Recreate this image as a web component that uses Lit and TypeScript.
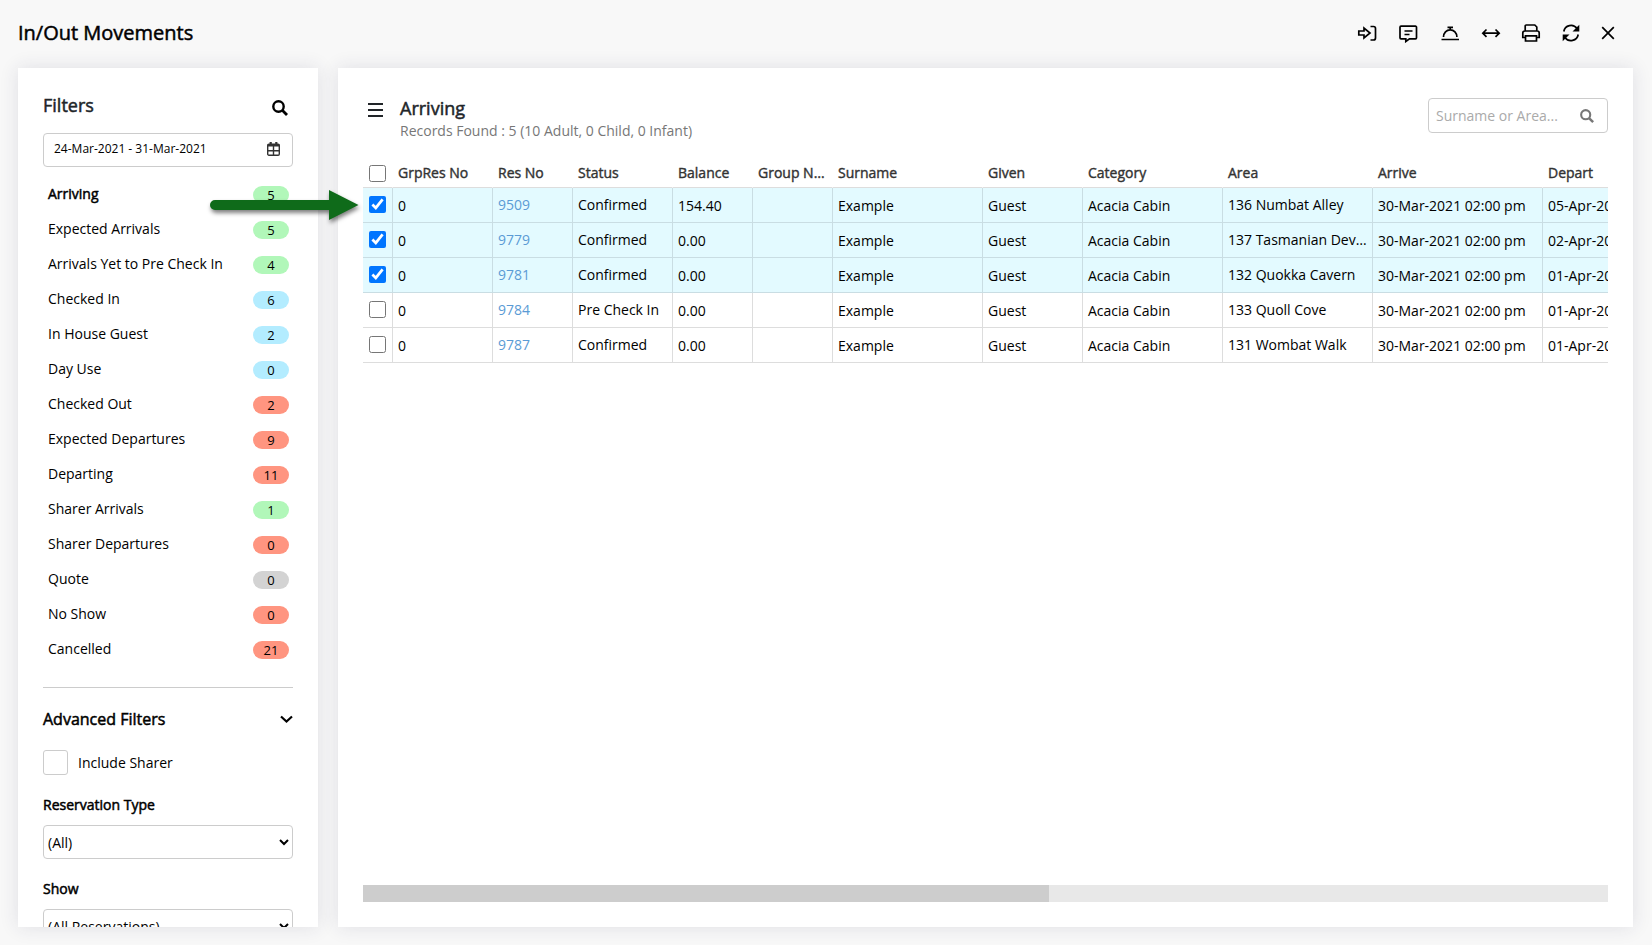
import { LitElement, html, css, svg } from "lit";
import { customElement, state } from "lit/decorators.js";
import { classMap } from "lit/directives/class-map.js";

type Tone = "green" | "blue" | "red" | "grey";

const FILTERS: [string, number, Tone][] = [
  ["Arriving", 5, "green"],
  ["Expected Arrivals", 5, "green"],
  ["Arrivals Yet to Pre Check In", 4, "green"],
  ["Checked In", 6, "blue"],
  ["In House Guest", 2, "blue"],
  ["Day Use", 0, "blue"],
  ["Checked Out", 2, "red"],
  ["Expected Departures", 9, "red"],
  ["Departing", 11, "red"],
  ["Sharer Arrivals", 1, "green"],
  ["Sharer Departures", 0, "red"],
  ["Quote", 0, "grey"],
  ["No Show", 0, "red"],
  ["Cancelled", 21, "red"],
];

interface Reservation {
  res: string;
  status: string;
  balance: string;
  area: string;
  depart: string;
  selected: boolean;
}

const RESERVATIONS: Reservation[] = [
  { res: "9509", status: "Confirmed", balance: "154.40", area: "136 Numbat Alley", depart: "05-Apr-2021 10:00 am", selected: true },
  { res: "9779", status: "Confirmed", balance: "0.00", area: "137 Tasmanian Devil Den", depart: "02-Apr-2021 10:00 am", selected: true },
  { res: "9781", status: "Confirmed", balance: "0.00", area: "132 Quokka Cavern", depart: "01-Apr-2021 10:00 am", selected: true },
  { res: "9784", status: "Pre Check In", balance: "0.00", area: "133 Quoll Cove", depart: "01-Apr-2021 10:00 am", selected: false },
  { res: "9787", status: "Confirmed", balance: "0.00", area: "131 Wombat Walk", depart: "01-Apr-2021 10:00 am", selected: false },
];

const COLUMNS: [string, number][] = [
  ["GrpRes No", 100],
  ["Res No", 80],
  ["Status", 100],
  ["Balance", 80],
  ["Group Name", 80],
  ["Surname", 150],
  ["Given", 100],
  ["Category", 140],
  ["Area", 150],
  ["Arrive", 170],
  ["Depart", 170],
];

const TOOLS = [
  {
    label: "Check in",
    width: 20,
    art: svg`<path d="M1.800 8H7V5l6 5-6 5v-3H1.800zM13.500 3.500h3a2 2 0 0 1 2 2v9.500a2 2 0 0 1-2 2h-3"/>`,
  },
  {
    label: "Notes",
    width: 22,
    art: svg`<path d="M4 3.200h14.500a1 1 0 0 1 1 1v10.600a1 1 0 0 1-1 1h-6L8.800 18.500v-2.700H4a1 1 0 0 1-1-1V4.200a1 1 0 0 1 1-1zM7.500 8h8M7.500 11.500h5"/>`,
  },
  {
    label: "Service",
    width: 22,
    art: svg`<path d="M2.500 16.500h17.500M4.500 14a6.700 7.200 0 0 1 13.400 0M8.500 4.300h5.500M11.200 4.300v2.500"/>`,
  },
  {
    label: "Move",
    width: 20,
    art: svg`<path d="M1.800 10.200h16.400M5.500 6.500 1.800 10.200l3.700 3.700M14.500 6.500l3.700 3.700-3.700 3.700"/>`,
  },
  {
    label: "Print",
    width: 20,
    art: svg`<path d="M4.200 8V3a1 1 0 0 1 1-1h8.600l2 2v4M4.500 14.500H1.800v-4.500a2 2 0 0 1 2-2h12.400a2 2 0 0 1 2 2v4.500h-2.700M4.500 12.800h11v5.200h-11z"/>`,
  },
  {
    label: "Refresh",
    width: 20,
    art: svg`<path d="M2.800 8.500A7.300 7.300 0 0 1 16 5.500M17.200 11.500A7.300 7.300 0 0 1 4 14.500"/><path class="fill" d="M18.300 1.800v6.800h-6.800zM1.700 18.200v-6.800h6.800z"/>`,
  },
  {
    label: "Close",
    width: 14,
    art: svg`<path d="M1.200 4.200l11.600 11.600M12.800 4.200L1.200 15.800"/>`,
  },
];

const searchIcon = (size: number) => html`<svg viewBox="0 0 16 16" width=${size} height=${size} aria-hidden="true">
  <circle cx="6.500" cy="6.500" r="5.200" fill="none" stroke="currentColor" stroke-width="2.400" />
  <path d="M10.300 10.300 15 15" fill="none" stroke="currentColor" stroke-width="2.800" />
</svg>`;

@customElement("app-root")
export class AppRoot extends LitElement {
  @state() private active = "Arriving";
  @state() private rows = RESERVATIONS;

  static styles = css`
    :host {
      display: flex;
      flex-direction: column;
      height: 100vh;
      overflow: hidden;
      background: #f8f8f8;
      color: #000;
      font: 14px/20px "Open Sans", sans-serif;
    }
    * {
      box-sizing: border-box;
    }
    h1,
    h2,
    h3,
    p {
      margin: 0;
      font-weight: 400;
    }
    button {
      font: inherit;
      color: inherit;
      background: none;
      border: 0;
      padding: 0;
      cursor: pointer;
    }
    .strong {
      -webkit-text-stroke: 0.5px currentColor;
    }
    .top {
      display: flex;
      align-items: center;
      justify-content: space-between;
      flex: none;
      height: 68px;
      padding: 0 37px 2px 18px;
    }
    .top h1 {
      font-size: 20px;
      line-height: 28px;
    }
    .tools {
      display: flex;
      gap: 20px;
    }
    .tools button {
      display: block;
      height: 20px;
    }
    .tools svg {
      display: block;
      fill: none;
      stroke: currentColor;
      stroke-width: 1.7;
    }
    .tools .fill {
      fill: currentColor;
      stroke: none;
    }
    .body {
      display: flex;
      flex: 1;
      min-height: 0;
      gap: 20px;
      padding: 0 19px 18px 18px;
    }
    .panel {
      background: #fff;
      box-shadow: 0 0 18px rgba(40, 40, 80, 0.12);
      padding: 25px;
    }
    .side {
      flex: none;
      width: 300px;
      padding-bottom: 0;
      overflow: hidden;
    }
    .heading {
      display: flex;
      align-items: center;
      justify-content: space-between;
      height: 26px;
      padding-right: 5px;
      color: #212529;
    }
    .heading h2 {
      padding-bottom: 2px;
      font-size: 18px;
      line-height: 24px;
    }
    .heading button {
      height: 16px;
      margin-top: 4px;
      color: #000;
    }
    .heading svg,
    .search svg,
    .date svg,
    .more svg {
      display: block;
    }
    .date {
      display: flex;
      align-items: center;
      height: 34px;
      margin-top: 14px;
      padding: 0 12px 2px 10px;
      border: 1px solid #ccc;
      border-radius: 4px;
    }
    .date input,
    .search input {
      flex: 1;
      min-width: 0;
      padding: 0;
      border: 0;
      outline: 0;
      background: none;
      font: 12px/20px "Open Sans", sans-serif;
      color: #000;
    }
    .list {
      list-style: none;
      margin: 10px 0 0;
      padding: 0;
    }
    .list button {
      display: flex;
      align-items: center;
      justify-content: space-between;
      width: 100%;
      height: 35px;
      padding: 0 4px 0 5px;
      text-align: left;
    }
    .name {
      padding-bottom: 2px;
    }
    .pill {
      width: 36px;
      height: 18px;
      margin-top: 1px;
      border-radius: 9px;
      font-size: 13px;
      line-height: 19px;
      text-align: center;
    }
    .green {
      background: #b1f7b9;
    }
    .blue {
      background: #b3ecff;
    }
    .red {
      background: #ff9580;
    }
    .grey {
      background: #d3d3d3;
    }
    .more {
      display: flex;
      align-items: center;
      justify-content: space-between;
      width: 100%;
      margin-top: 20px;
      padding: 19px 0 1px;
      border-top: 1px solid #ccc;
    }
    .more h3 {
      font-size: 16px;
      line-height: 24px;
    }
    .sharer {
      display: flex;
      align-items: center;
      gap: 10px;
      margin-top: 18px;
    }
    .sharer input {
      appearance: none;
      width: 25px;
      height: 25px;
      margin: 0;
      border: 1px solid #ccc;
      border-radius: 3px;
    }
    .field {
      display: block;
      margin-top: 20px;
    }
    select {
      display: block;
      width: 100%;
      height: 34px;
      margin-top: 10px;
      border: 1px solid #ccc;
      border-radius: 4px;
      background: #fff;
      color: #000;
      font: 14px/20px "Open Sans", sans-serif;
    }
    .main {
      display: flex;
      flex-direction: column;
      flex: 1;
      min-width: 0;
    }
    .bar {
      display: flex;
      align-items: flex-start;
      gap: 17px;
      padding-left: 5px;
      color: #212529;
    }
    .bar .menu {
      padding-top: 10px;
    }
    .bar .menu svg {
      display: block;
    }
    .titles {
      flex: 1;
      padding-top: 4px;
    }
    .titles h2 {
      font-size: 18px;
      line-height: 22px;
    }
    .titles p {
      color: #777;
      line-height: 24px;
    }
    .search {
      display: flex;
      align-items: center;
      width: 180px;
      height: 35px;
      margin-top: 5px;
      padding: 0 13px 0 7px;
      border: 1px solid #ccc;
      border-radius: 4px;
      color: #777;
    }
    .search input {
      font-size: 14px;
    }
    .search input::placeholder {
      color: #aaa;
    }
    .grid {
      flex: 1;
      min-height: 0;
      margin-top: 15px;
      overflow: hidden;
    }
    table {
      table-layout: fixed;
      width: 1350px;
      border-collapse: separate;
      border-spacing: 0;
    }
    th,
    td {
      height: 35px;
      padding: 0 5px;
      border-bottom: 1px solid #ddd;
      border-right: 1px solid #ddd;
      overflow: hidden;
      white-space: nowrap;
      text-overflow: ellipsis;
      text-align: left;
      font-weight: 400;
    }
    th {
      height: 30px;
      border-right-color: transparent;
      color: #333;
      -webkit-text-stroke: 0.4px currentColor;
    }
    td {
      padding-top: 1px;
    }
    td.up {
      padding-top: 0;
      padding-bottom: 1px;
    }
    th.pick {
      padding: 2px 6px 0;
    }
    td.pick {
      padding: 0 6px 1px;
    }
    .chosen td {
      background: #e3faff;
      border-color: #c9dde3;
    }
    .pick input {
      display: block;
      width: 17px;
      height: 17px;
      margin: 0;
      accent-color: #0075ff;
    }
    td a {
      color: #5b9bd5;
      text-decoration: none;
    }
    .track {
      flex: none;
      height: 17px;
      background: #e8e8e8;
    }
    .thumb {
      width: 55.1%;
      height: 17px;
      background: #cdcdcd;
    }
    .arrow {
      position: absolute;
      left: 205px;
      top: 185px;
      pointer-events: none;
      filter: drop-shadow(1px 3px 2px rgba(0, 0, 0, 0.5));
    }
  `;

  private toggle(row: Reservation) {
    this.rows = this.rows.map((r) => (r === row ? { ...r, selected: !r.selected } : r));
  }

  private renderSide() {
    return html`<aside class="panel side">
      <div class="heading">
        <h2 class="strong">Filters</h2>
        <button aria-label="Search">${searchIcon(16)}</button>
      </div>
      <div class="date">
        <input aria-label="Date range" .value=${"24-Mar-2021 - 31-Mar-2021"} />
        <svg viewBox="0 0 13 14" width="13" height="14" aria-hidden="true">
          <rect x="0.700" y="2.200" width="11.600" height="11" rx="1.200" fill="none" stroke="#333" stroke-width="1.400" />
          <path d="M0.500 3.500h12M3.700 0v3M9.300 0v3" fill="none" stroke="#333" stroke-width="2.200" />
          <path d="M6.500 4v9M1 8.700h11" fill="none" stroke="#333" stroke-width="1.400" />
        </svg>
      </div>
      <ul class="list">
        ${FILTERS.map(
          ([name, count, tone]) => html`<li>
            <button @click=${() => (this.active = name)}>
              <span class=${classMap({ name: true, strong: this.active === name })}>${name}</span>
              <span class="pill ${tone}">${count}</span>
            </button>
          </li>`,
        )}
      </ul>
      <button class="more" aria-expanded="true">
        <h3 class="strong">Advanced Filters</h3>
        <svg viewBox="0 0 13 9" width="13" height="9" aria-hidden="true">
          <path d="M1 1.500l5.500 5 5.500-5" fill="none" stroke="currentColor" stroke-width="2.200" />
        </svg>
      </button>
      <label class="sharer"><input type="checkbox" />Include Sharer</label>
      <label class="field strong" for="type">Reservation Type</label>
      <select id="type">
        <option>(All)</option>
      </select>
      <label class="field strong" for="show">Show</label>
      <select id="show">
        <option>(All Reservations)</option>
      </select>
    </aside>`;
  }

  private renderRow(row: Reservation) {
    return html`<tr class=${classMap({ chosen: row.selected })}>
      <td class="pick">
        <input type="checkbox" aria-label="Select ${row.res}" .checked=${row.selected} @change=${() => this.toggle(row)} />
      </td>
      <td>0</td>
      <td class="up"><a href="#${row.res}">${row.res}</a></td>
      <td class="up">${row.status}</td>
      <td>${row.balance}</td>
      <td></td>
      <td>Example</td>
      <td>Guest</td>
      <td>Acacia Cabin</td>
      <td class="up">${row.area}</td>
      <td>30-Mar-2021 02:00 pm</td>
      <td>${row.depart}</td>
    </tr>`;
  }

  render() {
    return html`
      <header class="top">
        <h1 class="strong">In/Out Movements</h1>
        <div class="tools">
          ${TOOLS.map(
            (tool) => html`<button aria-label=${tool.label}>
              <svg viewBox="0 0 ${tool.width} 20" width=${tool.width} height="20">${tool.art}</svg>
            </button>`,
          )}
        </div>
      </header>
      <div class="body">
        ${this.renderSide()}
        <main class="panel main">
          <div class="bar">
            <button class="menu" aria-label="Menu">
              <svg viewBox="0 0 15 14" width="15" height="14" aria-hidden="true">
                <path d="M0 1h15M0 7h15M0 13h15" stroke="currentColor" stroke-width="2" />
              </svg>
            </button>
            <div class="titles">
              <h2 class="strong">Arriving</h2>
              <p>Records Found : 5 (10 Adult, 0 Child, 0 Infant)</p>
            </div>
            <div class="search">
              <input aria-label="Search" placeholder="Surname or Area..." />
              ${searchIcon(14)}
            </div>
          </div>
          <div class="grid">
            <table>
              <colgroup>
                <col style="width:30px" />
                ${COLUMNS.map(([, width]) => html`<col style="width:${width}px" />`)}
              </colgroup>
              <thead>
                <tr>
                  <th class="pick"><input type="checkbox" aria-label="Select all" /></th>
                  ${COLUMNS.map(([name]) => html`<th>${name}</th>`)}
                </tr>
              </thead>
              <tbody>
                ${this.rows.map((row) => this.renderRow(row))}
              </tbody>
            </table>
          </div>
          <div class="track"><div class="thumb"></div></div>
        </main>
      </div>
      <svg class="arrow" viewBox="0 0 160 40" width="160" height="40" aria-hidden="true">
        <path d="M10 15h114V5l29.500 15L124 35V25H10a5 5 0 0 1 0-10z" fill="#0f6b1a" />
      </svg>
    `;
  }
}
